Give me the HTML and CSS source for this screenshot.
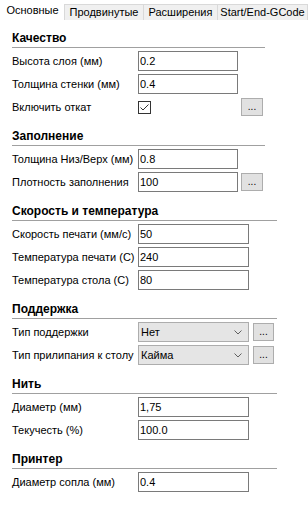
FILE: index.html
```html
<!DOCTYPE html>
<html lang="ru">
<head>
    <meta charset="UTF-8">
    <meta name="viewport" content="width=device-width, initial-scale=1.0">
    <title>Основные</title>
    <link rel="stylesheet" href="styles.css">
</head>
<body>
    <div class="tabs">
        <div class="tab tab-active">Основные</div>
        <div class="tab tab-2">Продвинутые</div>
        <div class="tab tab-3">Расширения</div>
        <div class="tab tab-4">Start/End-GCode</div>
    </div>

    <div class="panel">
        <div class="group">
            <h3 class="group-title">Качество</h3>
            <div class="row">
                <span class="row-label">Высота слоя (мм)</span>
                <input class="field" type="text" value="0.2">
            </div>
            <div class="row">
                <span class="row-label">Толщина стенки (мм)</span>
                <input class="field" type="text" value="0.4">
            </div>
            <div class="row">
                <span class="row-label">Включить откат</span>
                <div class="field-slot">
                    <span class="check">
                        <svg width="11" height="11" viewBox="0 0 11 11"><polyline points="1.5,5.5 4,8 9.5,2.5" fill="none" stroke="#333" stroke-width="1"/></svg>
                    </span>
                </div>
                <button class="more" type="button">...</button>
            </div>
        </div>

        <div class="group">
            <h3 class="group-title">Заполнение</h3>
            <div class="row">
                <span class="row-label">Толщина Низ/Верх (мм)</span>
                <input class="field" type="text" value="0.8">
            </div>
            <div class="row">
                <span class="row-label">Плотность заполнения</span>
                <input class="field" type="text" value="100">
                <button class="more" type="button">...</button>
            </div>
        </div>

        <div class="group group-wide">
            <h3 class="group-title">Скорость и температура</h3>
            <div class="row">
                <span class="row-label">Скорость печати (мм/с)</span>
                <input class="field field-wide" type="text" value="50">
            </div>
            <div class="row">
                <span class="row-label">Температура печати (С)</span>
                <input class="field field-wide" type="text" value="240">
            </div>
            <div class="row">
                <span class="row-label">Температура стола (С)</span>
                <input class="field field-wide" type="text" value="80">
            </div>
        </div>

        <div class="group group-wide">
            <h3 class="group-title">Поддержка</h3>
            <div class="row">
                <span class="row-label">Тип поддержки</span>
                <div class="combo">
                    <span class="combo-text">Нет</span>
                    <svg class="combo-arrow" width="8" height="5" viewBox="0 0 8 5"><polyline points="0.5,0.5 4,4 7.5,0.5" fill="none" stroke="#606060" stroke-width="1"/></svg>
                </div>
                <button class="more more-wide" type="button">...</button>
            </div>
            <div class="row">
                <span class="row-label">Тип прилипания к столу</span>
                <div class="combo">
                    <span class="combo-text">Кайма</span>
                    <svg class="combo-arrow" width="8" height="5" viewBox="0 0 8 5"><polyline points="0.5,0.5 4,4 7.5,0.5" fill="none" stroke="#606060" stroke-width="1"/></svg>
                </div>
                <button class="more more-wide" type="button">...</button>
            </div>
        </div>

        <div class="group group-wide">
            <h3 class="group-title">Нить</h3>
            <div class="row">
                <span class="row-label">Диаметр (мм)</span>
                <input class="field field-wide" type="text" value="1,75">
            </div>
            <div class="row">
                <span class="row-label">Текучесть (%)</span>
                <input class="field field-wide" type="text" value="100.0">
            </div>
        </div>

        <div class="group group-wide">
            <h3 class="group-title">Принтер</h3>
            <div class="row">
                <span class="row-label">Диаметр сопла (мм)</span>
                <input class="field field-wide" type="text" value="0.4">
            </div>
        </div>
    </div>
</body>
</html>
```

FILE: styles.css
```css
body {
    margin: 0;
    width: 308px;
    height: 515px;
    overflow: hidden;
    background: #fff;
    color: #000;
    font-family: "Liberation Sans", Arial, sans-serif;
    font-size: 11px;
}

/* tabs */
.tabs {
    display: flex;
    align-items: flex-end;
    height: 20px;
}
.tab {
    box-sizing: border-box;
    height: 16px;
    padding-top: 1px;
    background: #f0f0f0;
    border: 1px solid #d9d9d9;
    border-bottom: none;
    border-right: none;
    font-size: 11px;
    line-height: 12px;
    text-align: center;
    white-space: nowrap;
    overflow: hidden;
}
.tab-active {
    width: 64px;
    height: 18px;
    background: #fff;
    border-color: transparent;
}
.tab-2 { width: 79px; }
.tab-3 { width: 74px; }
.tab-4 {
    flex: 1;
    border-right: 1px solid #d9d9d9;
}

/* groups */
.panel {
    padding-left: 12px;
}
.group {
    display: flex;
    flex-direction: column;
    gap: 3px;
    width: 253px;
    margin-top: 12px;
}
.group:first-child {
    margin-top: 11px;
}
.group-wide {
    width: 265px;
}
.group-title {
    margin: 0;
    padding-bottom: 2px;
    border-bottom: 1px solid #a0a0a0;
    font-size: 12px;
    font-weight: bold;
    line-height: 14px;
}

.row {
    display: flex;
    align-items: center;
    height: 20px;
}
.row-label {
    flex: none;
    width: 126px;
    white-space: nowrap;
}
.field {
    box-sizing: border-box;
    width: 100px;
    height: 20px;
    margin: 0;
    padding: 0 1px;
    border: 1px solid #7a7a7a;
    border-radius: 0;
    background: #fff;
    color: #000;
    font: inherit;
    outline: none;
}
.field-wide {
    width: 111px;
}
.field-slot {
    width: 100px;
    height: 20px;
    display: flex;
    align-items: center;
}
.check {
    box-sizing: border-box;
    width: 13px;
    height: 13px;
    border: 1px solid #333;
    background: #fff;
    display: flex;
}

.more {
    box-sizing: border-box;
    width: 22px;
    height: 18px;
    margin: 0 0 0 3px;
    padding: 0;
    background: #e1e1e1;
    border: 1px solid #adadad;
    border-radius: 0;
    color: #000;
    font: inherit;
    font-size: 10px;
    line-height: 14px;
}
.more-wide {
    width: 21px;
    margin-left: 4px;
}

.combo {
    box-sizing: border-box;
    display: flex;
    align-items: center;
    justify-content: space-between;
    width: 111px;
    height: 20px;
    padding: 0 6px 0 2px;
    background: #e5e5e5;
    border: 1px solid #adadad;
}
```
